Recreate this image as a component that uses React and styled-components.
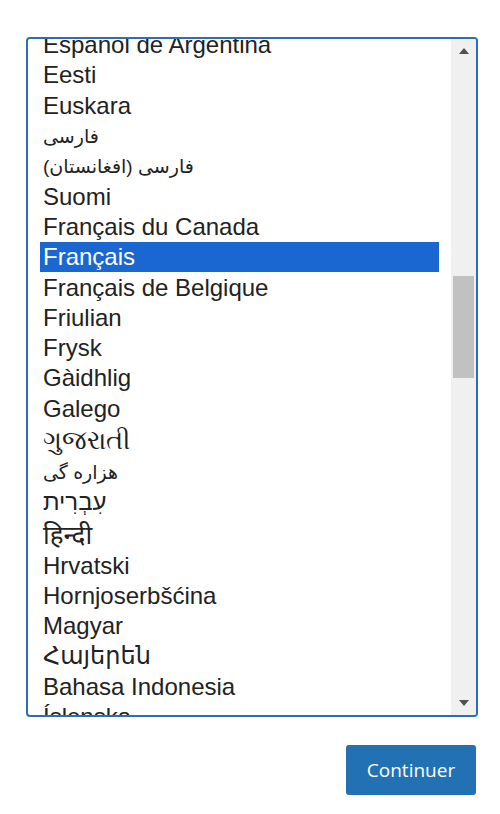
import React from "react"
import styled, { createGlobalStyle } from "styled-components"

const languages = [
  { label: "Español de Argentina" },
  { label: "Eesti" },
  { label: "Euskara" },
  { label: "فارسی", script: "arabic" },
  { label: "فارسی (افغانستان)", script: "arabic" },
  { label: "Suomi" },
  { label: "Français du Canada" },
  { label: "Français", selected: true },
  { label: "Français de Belgique" },
  { label: "Friulian" },
  { label: "Frysk" },
  { label: "Gàidhlig" },
  { label: "Galego" },
  { label: "ગુજરાતી", script: "tall" },
  { label: "هزاره گی", script: "arabic" },
  { label: "עִבְרִית", script: "hebrew" },
  { label: "हिन्दी", script: "tall" },
  { label: "Hrvatski" },
  { label: "Hornjoserbšćina" },
  { label: "Magyar" },
  { label: "Հայերեն" },
  { label: "Bahasa Indonesia" },
  { label: "Íslenska" },
  { label: "Italiano" },
]

const scriptSizes = {
  arabic: "19px",
  hebrew: "24px",
  tall: "26px",
}

const GlobalStyle = createGlobalStyle`
  body {
    margin: 0;
    background: #fff;
    font-family: "Liberation Sans", Arial, sans-serif;
  }
`

const Page = styled.div`
  width: 452px;
  padding: 37px 22px 0 26px;
`

const ListBox = styled.div`
  display: flex;
  height: 680px;
  box-sizing: border-box;
  border: 2px solid #2d6db5;
  border-radius: 4px;
  overflow: hidden;
`

const Options = styled.div`
  flex: 1;
  overflow: hidden;
  padding: 0 12px;
`

const OptionList = styled.ul`
  list-style: none;
  margin: -9px 0 0;
  padding: 0;
`

const Option = styled.li`
  height: ${(p) => (p.$script === "tall" ? "33px" : "30.3px")};
  display: flex;
  align-items: center;
  padding-left: 3px;
  font-size: ${(p) => scriptSizes[p.$script] || "24px"};
  white-space: nowrap;
  font-family: "Liberation Sans", "DejaVu Sans", "Noto Sans", sans-serif;
  color: ${(p) => (p.$selected ? "#fff" : "#222")};
  background: ${(p) => (p.$selected ? "#1a67d2" : "transparent")};
`

const Scrollbar = styled.div`
  width: 25px;
  background: #f0f0f0;
  display: flex;
  flex-direction: column;
  align-items: center;
`

const ArrowButton = styled.div`
  height: 24px;
  width: 100%;
  display: flex;
  align-items: center;
  justify-content: center;
`

const Track = styled.div`
  flex: 1;
  width: 100%;
  display: flex;
  flex-direction: column;
  padding-top: 213px;
  box-sizing: border-box;
`

const Thumb = styled.div`
  height: 102px;
  margin: 0 2px;
  background: #c1c1c1;
`

const Actions = styled.div`
  display: flex;
  justify-content: flex-end;
  margin-top: 28px;
  padding-right: 2px;
`

const Button = styled.button`
  width: 130px;
  height: 50px;
  border: none;
  border-radius: 3px;
  background: #2271b3;
  color: #fff;
  font-family: "Open Sans", "Noto Sans", sans-serif;
  font-size: 19px;
`

const Triangle = ({ down }) => (
  <svg width="10" height="6" viewBox="0 0 10 6">
    <path d={down ? "M0 0 L10 0 L5 6 Z" : "M0 6 L10 6 L5 0 Z"} fill="#505050" />
  </svg>
)

const App = () => (
  <>
    <GlobalStyle />
    <Page>
      <ListBox>
        <Options>
          <OptionList>
            {languages.map((lang) => (
              <Option
                key={lang.label}
                $selected={lang.selected}
                $script={lang.script}
              >
                {lang.label}
              </Option>
            ))}
          </OptionList>
        </Options>
        <Scrollbar>
          <ArrowButton>
            <Triangle />
          </ArrowButton>
          <Track>
            <Thumb />
          </Track>
          <ArrowButton>
            <Triangle down />
          </ArrowButton>
        </Scrollbar>
      </ListBox>
      <Actions>
        <Button>Continuer</Button>
      </Actions>
    </Page>
  </>
)

export default App
